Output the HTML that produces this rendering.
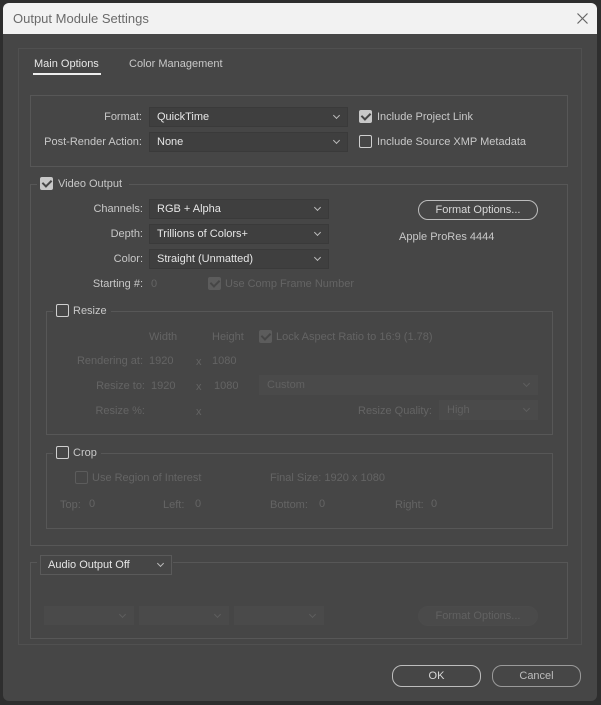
<!DOCTYPE html>
<html><head><style>
*{box-sizing:border-box;margin:0;padding:0}
body{width:601px;height:705px;background:#2e2e2e;font-family:"Liberation Sans",sans-serif;font-size:11px;color:#c8c8c8;position:relative;overflow:hidden}
.a{position:absolute;white-space:nowrap}
#dlg{position:absolute;left:3px;top:3px;width:594px;height:698px;background:#464646;border-radius:6px;overflow:hidden}
#title{position:absolute;left:0;top:0;width:594px;height:31px;background:#f2f2f2;color:#6a6a6a;font-size:13px;padding:8px 0 0 10px}
.box{position:absolute;border:1px solid #575757}
.dd{position:absolute;height:20px;background:#3f3f3f;border:1px solid #3a3a3a;color:#e6e6e6;padding:3px 0 0 7px}
.dd:after{content:"";position:absolute;right:8px;top:5px;width:4px;height:4px;border-right:1px solid #bbb;border-bottom:1px solid #bbb;transform:rotate(45deg)}
.dis{background:#4a4a4a;border-color:#4a4a4a;color:#616161}
.dis:after{border-color:#5e5e5e}
.cb{position:absolute;width:13px;height:13px;border:1.5px solid #cfcfcf;border-radius:2px}
.cb.on{background:#c8c8c8;border-color:#c8c8c8}
.cb.on:after{content:"";position:absolute;left:3px;top:0px;width:4px;height:7px;border-right:2px solid #464646;border-bottom:2px solid #464646;transform:rotate(45deg)}
.cb.d{border-color:#5c5c5c}
.cb.d.on{background:#5c5c5c}
.lbl{text-align:right}
.g{color:#646464}
.btn{position:absolute;height:20px;border:1px solid #bdbdbd;border-radius:10px;text-align:center;padding-top:3px;color:#d8d8d8}
.leg{position:absolute;background:#464646;padding:0 6px 0 4px}
</style></head><body>
<div id="dlg">
<div id="title">Output Module Settings</div>
<svg class="a" style="left:574px;top:10px" width="11" height="11"><path d="M0.5 0.5L10.5 10.5M10.5 0.5L0.5 10.5" stroke="#666" stroke-width="1.2"/></svg>
<div class="box" style="left:15px;top:45px;width:564px;height:597px;border-color:#505050"></div>
<div class="a" style="left:31px;top:55px;color:#e8e8e8">Main Options</div>
<div class="a" style="left:30px;top:70px;width:68px;height:2px;background:#eee"></div>
<div class="a" style="left:126px;top:55px">Color Management</div>

<div class="box" style="left:27px;top:92px;width:538px;height:72px"></div>
<div class="a lbl" style="left:20px;width:119px;top:108px">Format:</div>
<div class="dd" style="left:146px;top:104px;width:199px">QuickTime</div>
<div class="a lbl" style="left:20px;width:119px;top:133px">Post-Render Action:</div>
<div class="dd" style="left:146px;top:129px;width:199px">None</div>
<div class="cb on" style="left:356px;top:107px"></div>
<div class="a" style="left:374px;top:108px">Include Project Link</div>
<div class="cb" style="left:356px;top:132px"></div>
<div class="a" style="left:374px;top:133px">Include Source XMP Metadata</div>

<div class="box" style="left:27px;top:181px;width:538px;height:362px"></div>
<div class="leg" style="left:34px;top:173px;height:16px;width:92px"></div>
<div class="cb on" style="left:37px;top:174px"></div>
<div class="a" style="left:55px;top:175px">Video Output</div>
<div class="a lbl" style="left:40px;width:100px;top:200px">Channels:</div>
<div class="dd" style="left:146px;top:196px;width:180px">RGB + Alpha</div>
<div class="a lbl" style="left:40px;width:100px;top:225px">Depth:</div>
<div class="dd" style="left:146px;top:221px;width:180px">Trillions of Colors+</div>
<div class="a lbl" style="left:40px;width:100px;top:250px">Color:</div>
<div class="dd" style="left:146px;top:246px;width:180px">Straight (Unmatted)</div>
<div class="btn" style="left:415px;top:197px;width:120px">Format Options...</div>
<div class="a" style="left:396px;top:228px">Apple ProRes 4444</div>
<div class="a lbl" style="left:40px;width:100px;top:275px">Starting #:</div>
<div class="a g" style="left:148px;top:275px">0</div>
<div class="cb d on" style="left:205px;top:274px"></div>
<div class="a g" style="left:222px;top:275px">Use Comp Frame Number</div>

<div class="box" style="left:43px;top:308px;width:507px;height:124px"></div>
<div class="leg" style="left:50px;top:300px;height:16px;width:58px"></div>
<div class="cb" style="left:53px;top:301px"></div>
<div class="a" style="left:70px;top:302px">Resize</div>
<div class="a g" style="left:146px;top:328px">Width</div>
<div class="a g" style="left:209px;top:328px">Height</div>
<div class="cb d on" style="left:256px;top:327px"></div>
<div class="a g" style="left:273px;top:328px">Lock Aspect Ratio to 16:9 (1.78)</div>
<div class="a g lbl" style="left:40px;width:100px;top:352px">Rendering at:</div>
<div class="a g" style="left:146px;top:352px">1920</div>
<div class="a g" style="left:193px;top:353px">x</div>
<div class="a g" style="left:209px;top:352px">1080</div>
<div class="a g lbl" style="left:40px;width:102px;top:377px">Resize to:</div>
<div class="a g" style="left:148px;top:377px">1920</div>
<div class="a g" style="left:193px;top:378px">x</div>
<div class="a g" style="left:211px;top:377px">1080</div>
<div class="dd dis" style="left:256px;top:372px;width:279px">Custom</div>
<div class="a g lbl" style="left:40px;width:102px;top:402px">Resize %:</div>
<div class="a g" style="left:193px;top:403px">x</div>
<div class="a g" style="left:355px;top:402px">Resize Quality:</div>
<div class="dd dis" style="left:436px;top:397px;width:99px">High</div>

<div class="box" style="left:43px;top:450px;width:507px;height:76px"></div>
<div class="leg" style="left:50px;top:442px;height:16px;width:48px"></div>
<div class="cb" style="left:53px;top:443px"></div>
<div class="a" style="left:70px;top:444px">Crop</div>
<div class="cb d" style="left:72px;top:468px"></div>
<div class="a g" style="left:89px;top:469px">Use Region of Interest</div>
<div class="a g" style="left:267px;top:469px">Final Size: 1920 x 1080</div>
<div class="a g" style="left:57px;top:496px">Top:</div><div class="a g" style="left:86px;top:495px">0</div>
<div class="a g" style="left:160px;top:496px">Left:</div><div class="a g" style="left:192px;top:495px">0</div>
<div class="a g" style="left:267px;top:496px">Bottom:</div><div class="a g" style="left:316px;top:495px">0</div>
<div class="a g" style="left:392px;top:496px">Right:</div><div class="a g" style="left:428px;top:495px">0</div>

<div class="box" style="left:27px;top:559px;width:538px;height:77px"></div>
<div class="leg" style="left:34px;top:550px;height:22px;width:136px"></div>
<div class="dd" style="left:37px;top:552px;width:132px;background:#464646;border-color:#5a5a5a">Audio Output Off</div>
<div class="dd dis" style="left:41px;top:603px;width:90px;height:19px"></div>
<div class="dd dis" style="left:136px;top:603px;width:90px;height:19px"></div>
<div class="dd dis" style="left:231px;top:603px;width:90px;height:19px"></div>
<div class="btn" style="left:415px;top:603px;width:120px;border-color:#4b4b4b;background:#4a4a4a;color:#616161">Format Options...</div>

<div class="btn" style="left:389px;top:662px;width:89px;height:22px;padding-top:4px">OK</div>
<div class="btn" style="left:489px;top:662px;width:89px;height:22px;padding-top:4px;border-color:#9a9a9a;color:#bdbdbd">Cancel</div>
</div>
</body></html>
